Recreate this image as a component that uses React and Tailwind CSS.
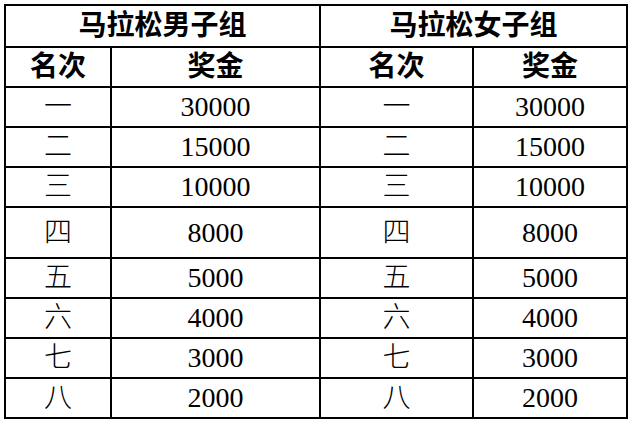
import { Fragment } from "react";

const rows = [
  ["一", "30000"],
  ["二", "15000"],
  ["三", "10000"],
  ["四", "8000"],
  ["五", "5000"],
  ["六", "4000"],
  ["七", "3000"],
  ["八", "2000"],
];

const font = { fontFamily: '"Liberation Serif", "Noto Sans CJK SC", serif' };

function Cell({ children, bold, span }) {
  return (
    <div
      className={
        "bg-white flex items-center justify-center text-[28px] leading-none text-black " +
        (bold ? "font-bold " : "font-light ") +
        (span ? "col-span-2" : "")
      }
    >
      {children}
    </div>
  );
}

export default function App() {
  return (
    <div className="w-[634px] h-[425px] bg-white p-[4px]" style={font}>
      <div className="grid w-[624px] bg-black gap-[2px] p-[2px] grid-cols-[104px_207px_151px_152px] grid-rows-[40px_38px_38px_38px_38px_49px_38px_38px_38px_38px]">
        <Cell bold span>马拉松男子组</Cell>
        <Cell bold span>马拉松女子组</Cell>
        <Cell bold>名次</Cell>
        <Cell bold>奖金</Cell>
        <Cell bold>名次</Cell>
        <Cell bold>奖金</Cell>
        {rows.map(([rank, prize]) => (
          <Fragment key={rank}>
            <Cell>{rank}</Cell>
            <Cell>{prize}</Cell>
            <Cell>{rank}</Cell>
            <Cell>{prize}</Cell>
          </Fragment>
        ))}
      </div>
    </div>
  );
}
